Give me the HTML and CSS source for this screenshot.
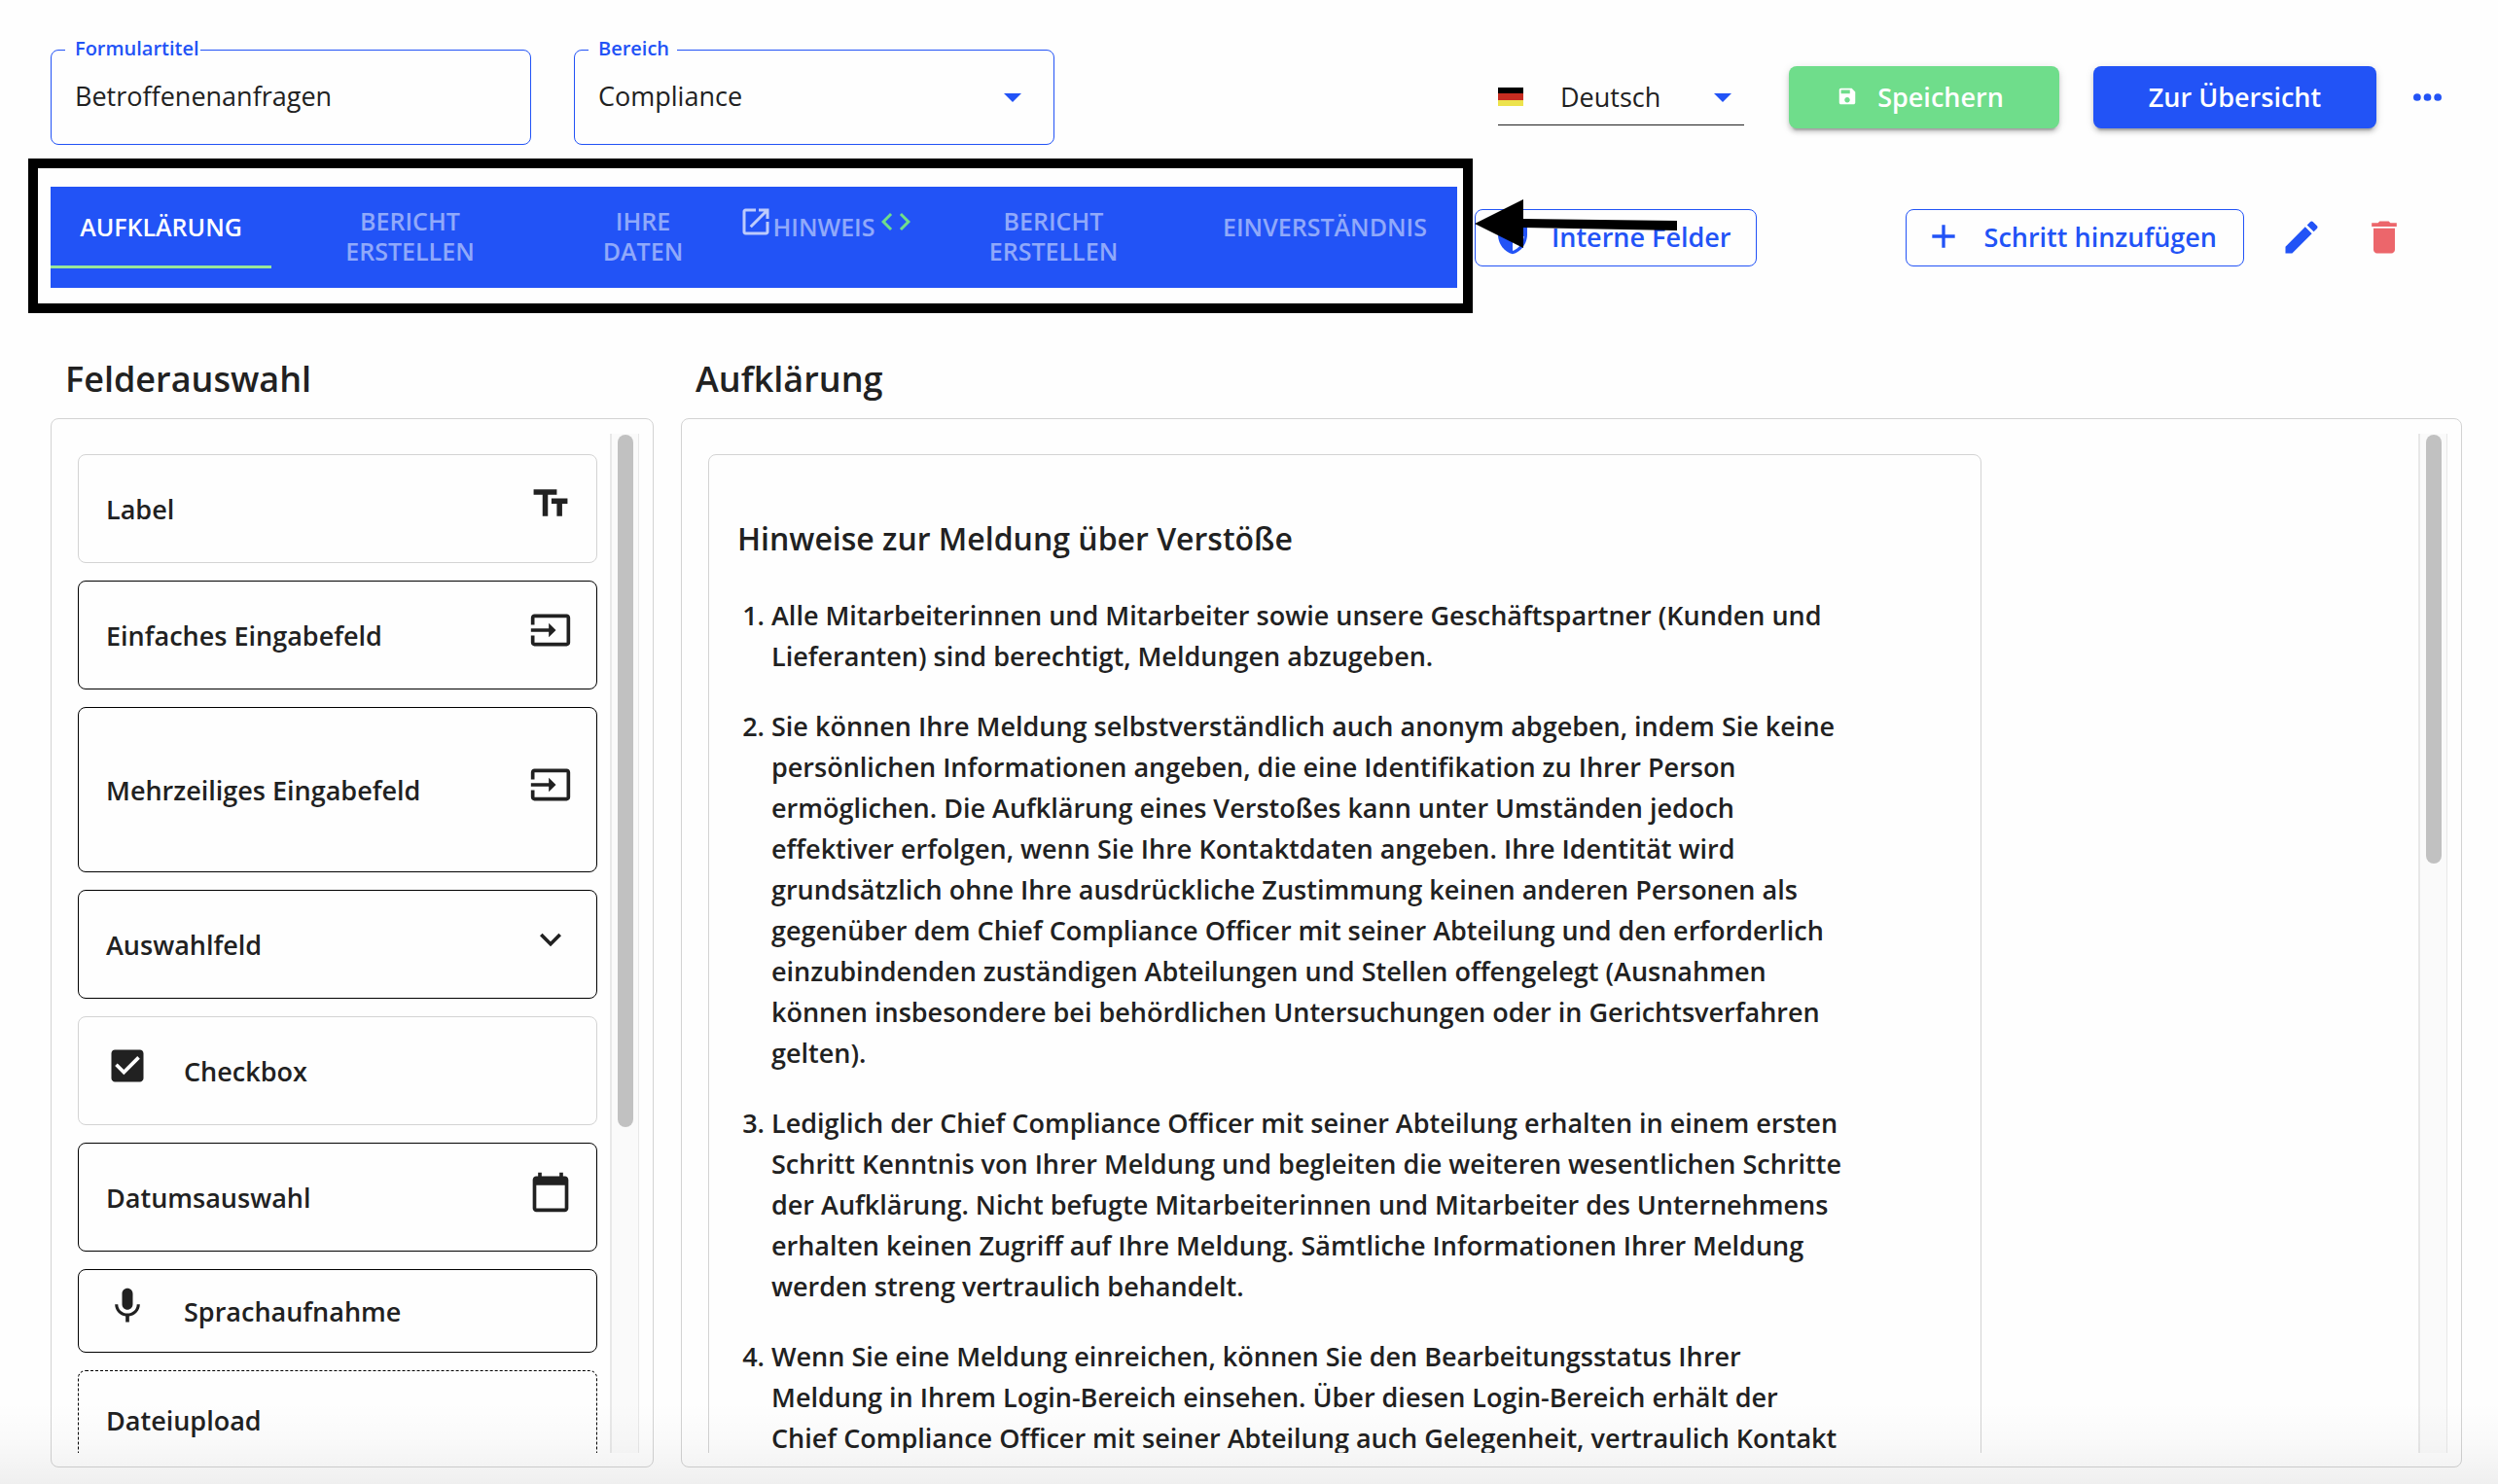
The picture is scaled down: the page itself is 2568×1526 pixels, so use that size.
FILE: index.html
```html
<!DOCTYPE html>
<html lang="de">
<head>
<meta charset="utf-8">
<title>Formular bearbeiten</title>
<link rel="stylesheet" href="styles.css">
</head>
<body>
<header class="topbar">
  <div class="field">
    <label class="field__label" for="title">Formulartitel</label>
    <input class="field__control" id="title" type="text" value="Betroffenenanfragen">
  </div>
  <div class="field field--select">
    <label class="field__label field__label--wide" for="area">Bereich</label>
    <select class="field__control" id="area"><option>Compliance</option></select>
  </div>
  <div class="topbar__actions">
    <div class="language">
      <svg class="language__flag" viewBox="0 0 26 19" aria-hidden="true"><rect width="26" height="6" fill="#000"/><rect y="6" width="26" height="7" fill="#c62c20"/><rect y="13" width="26" height="6" fill="#ede34c"/></svg>
      <select class="language__select" aria-label="Sprache"><option>Deutsch</option></select>
    </div>
    <button class="button button--save" type="button">
      <svg class="icon icon--small" viewBox="0 0 24 24" aria-hidden="true"><path d="M17 3H5c-1.110 0-2 .9-2 2v14c0 1.100.890 2 2 2h14c1.100 0 2-.9 2-2V7l-4-4zm-5 16c-1.660 0-3-1.340-3-3s1.340-3 3-3 3 1.340 3 3-1.340 3-3 3zm3-10H5V5h10v4z"/></svg>
      Speichern
    </button>
    <button class="button button--primary" type="button">Zur Übersicht</button>
    <button class="icon-button" type="button" aria-label="Mehr">
      <svg class="dots" viewBox="0 0 30 8" aria-hidden="true"><circle cx="4" cy="4" r="4"/><circle cx="15" cy="4" r="4"/><circle cx="26" cy="4" r="4"/></svg>
    </button>
  </div>
</header>

<div class="steps">
  <div class="steps__tabs">
    <nav class="tabs" aria-label="Schritte">
      <button class="tab tab--active" type="button">AUFKLÄRUNG</button>
      <button class="tab tab--tall" type="button">BERICHT<br>ERSTELLEN</button>
      <button class="tab tab--tall" type="button">IHRE<br>DATEN</button>
      <button class="tab" type="button">
        <svg class="tab__icon" viewBox="0 0 24 24" aria-hidden="true"><path d="M19 19H5V5h7V3H5c-1.110 0-2 .9-2 2v14c0 1.100.890 2 2 2h14c1.100 0 2-.9 2-2v-7h-2v7zM14 3v2h3.590l-9.830 9.830 1.410 1.410L19 6.410V10h2V3h-7z"/></svg>
        <span>HINWEIS</span>
        <svg class="tab__icon tab__icon--code" viewBox="0 0 24 24" aria-hidden="true"><path d="M9.400 16.600 4.800 12l4.600-4.600L8 6l-6 6 6 6 1.400-1.400zm5.200 0 4.600-4.600-4.600-4.600L16 6l6 6-6 6-1.400-1.400z"/></svg>
      </button>
      <button class="tab tab--tall" type="button">BERICHT<br>ERSTELLEN</button>
      <button class="tab" type="button">EINVERSTÄNDNIS</button>
    </nav>
    <div class="marker-frame"></div>
    <svg class="marker-arrow" viewBox="0 0 208 50" aria-hidden="true"><path d="M0 25 50 0v20l158 2v10L50 29v21z"/></svg>
  </div>
  <div class="steps__actions">
    <button class="button button--outline button--internal" type="button">
      <svg class="icon" viewBox="0 0 24 24" aria-hidden="true"><path d="M12 1 3 5v6c0 5.550 3.840 10.740 9 12 5.160-1.260 9-6.450 9-12V5l-9-4zm0 10.990h7c-.53 4.120-3.280 7.790-7 8.940V12H5V6.300l7-3.110v8.800z"/></svg>
      Interne Felder
    </button>
    <button class="button button--outline button--add" type="button">
      <svg class="icon" viewBox="0 0 24 24" aria-hidden="true"><path d="M19 13h-6v6h-2v-6H5v-2h6V5h2v6h6v2z"/></svg>
      Schritt hinzufügen
    </button>
    <button class="icon-button icon-button--edit" type="button" aria-label="Bearbeiten">
      <svg class="icon icon--large" viewBox="0 0 24 24" aria-hidden="true"><path d="M3 17.250V21h3.750L17.810 9.940l-3.750-3.750L3 17.250zM20.710 7.040c.39-.39.39-1.020 0-1.410l-2.340-2.340c-.39-.39-1.020-.39-1.410 0l-1.830 1.830 3.750 3.750 1.830-1.830z"/></svg>
    </button>
    <button class="icon-button icon-button--delete" type="button" aria-label="Löschen">
      <svg class="icon icon--large" viewBox="0 0 24 24" aria-hidden="true"><path d="M6 19c0 1.100.9 2 2 2h8c1.100 0 2-.9 2-2V7H6v12zM19 4h-3.500l-1-1h-5l-1 1H5v2h14V4z"/></svg>
    </button>
  </div>
</div>

<main class="editor">
  <section class="column">
    <h2 class="column__title">Felderauswahl</h2>
    <div class="panel">
      <div class="panel__scroll field-list">
        <div class="card card--light"><span>Label</span>
          <svg class="card__icon" viewBox="0 0 24 24" aria-hidden="true"><path d="M2.500 4v3h5v12h3V7h5V4h-13zm19 5h-9v3h3v7h3v-7h3V9z"/></svg></div>
        <div class="card"><span>Einfaches Eingabefeld</span>
          <svg class="card__icon" viewBox="0 0 24 24" aria-hidden="true"><path d="M21 3.010H3c-1.100 0-2 .9-2 2V9h2V4.990h18v14.030H3V15H1v4.010c0 1.100.9 1.980 2 1.980h18c1.100 0 2-.88 2-1.980v-14c0-1.110-.9-2-2-2zM11 16l4-4-4-4v3H1v2h10v3z"/></svg></div>
        <div class="card card--tall"><span>Mehrzeiliges Eingabefeld</span>
          <svg class="card__icon" viewBox="0 0 24 24" aria-hidden="true"><path d="M21 3.010H3c-1.100 0-2 .9-2 2V9h2V4.990h18v14.030H3V15H1v4.010c0 1.100.9 1.980 2 1.980h18c1.100 0 2-.88 2-1.980v-14c0-1.110-.9-2-2-2zM11 16l4-4-4-4v3H1v2h10v3z"/></svg></div>
        <div class="card"><span>Auswahlfeld</span>
          <svg class="card__icon" viewBox="0 0 24 24" aria-hidden="true"><path d="M16.590 8.590 12 13.170 7.410 8.590 6 10l6 6 6-6z"/></svg></div>
        <div class="card card--light card--lead">
          <svg class="card__icon" viewBox="0 0 24 24" aria-hidden="true"><path d="M19 3H5c-1.110 0-2 .9-2 2v14c0 1.100.890 2 2 2h14c1.110 0 2-.9 2-2V5c0-1.100-.89-2-2-2zm-9 14-5-5 1.410-1.410L10 14.170l7.590-7.590L19 8l-9 9z"/></svg><span>Checkbox</span></div>
        <div class="card"><span>Datumsauswahl</span>
          <svg class="card__icon" viewBox="0 0 24 24" aria-hidden="true"><path d="M20 3h-1V1h-2v2H7V1H5v2H4c-1.100 0-2 .9-2 2v16c0 1.100.9 2 2 2h16c1.100 0 2-.9 2-2V5c0-1.100-.9-2-2-2zm0 18H4V8h16v13z"/></svg></div>
        <div class="card card--short card--lead">
          <svg class="card__icon" viewBox="0 0 24 24" aria-hidden="true"><path d="M12 14c1.660 0 2.990-1.340 2.990-3L15 5c0-1.660-1.340-3-3-3S9 3.340 9 5v6c0 1.660 1.340 3 3 3zm5.300-3c0 3-2.540 5.100-5.300 5.100S6.700 14 6.700 11H5c0 3.410 2.720 6.230 6 6.720V21h2v-3.280c3.280-.48 6-3.300 6-6.720h-1.700z"/></svg><span>Sprachaufnahme</span></div>
        <div class="card card--upload"><span>Dateiupload</span></div>
      </div>
      <div class="scrollbar"><div class="scrollbar__thumb" style="height:68.1%"></div></div>
    </div>
  </section>

  <section class="column">
    <h2 class="column__title">Aufklärung</h2>
    <div class="panel">
      <div class="panel__scroll">
        <article class="notice">
          <h3 class="notice__title">Hinweise zur Meldung über Verstöße</h3>
          <ol class="notice__list">
            <li>Alle Mitarbeiterinnen und Mitarbeiter sowie unsere Geschäftspartner (Kunden und Lieferanten) sind berechtigt, Meldungen abzugeben.</li>
            <li>Sie können Ihre Meldung selbstverständlich auch anonym abgeben, indem Sie keine persönlichen Informationen angeben, die eine Identifikation zu Ihrer Person ermöglichen. Die Aufklärung eines Verstoßes kann unter Umständen jedoch effektiver erfolgen, wenn Sie Ihre Kontaktdaten angeben. Ihre Identität wird grundsätzlich ohne Ihre ausdrückliche Zustimmung keinen anderen Personen als gegenüber dem Chief Compliance Officer mit seiner Abteilung und den erforderlich einzubindenden zuständigen Abteilungen und Stellen offengelegt (Ausnahmen können insbesondere bei behördlichen Untersuchungen oder in Gerichtsverfahren gelten).</li>
            <li>Lediglich der Chief Compliance Officer mit seiner Abteilung erhalten in einem ersten Schritt Kenntnis von Ihrer Meldung und begleiten die weiteren wesentlichen Schritte der Aufklärung. Nicht befugte Mitarbeiterinnen und Mitarbeiter des Unternehmens erhalten keinen Zugriff auf Ihre Meldung. Sämtliche Informationen Ihrer Meldung werden streng vertraulich behandelt.</li>
            <li>Wenn Sie eine Meldung einreichen, können Sie den Bearbeitungsstatus Ihrer Meldung in Ihrem Login-Bereich einsehen. Über diesen Login-Bereich erhält der Chief Compliance Officer mit seiner Abteilung auch Gelegenheit, vertraulich Kontakt</li>
          </ol>
        </article>
      </div>
      <div class="scrollbar"><div class="scrollbar__thumb" style="height:42.2%"></div></div>
    </div>
  </section>
</main>
<div class="page-shade"></div>
</body>
</html>
```
FILE: styles.css
```css
:root {
  --blue: #2253f6;
  --green: #6fdd8b;
  --red: #ec666b;
  --text: #212121;
  --line: #d3d3d3;
}

* { box-sizing: border-box; }

body {
  margin: 0;
  height: 100vh;
  display: flex;
  flex-direction: column;
  position: relative;
  overflow: hidden;
  background: #fefefe;
  color: var(--text);
  font-family: "Open Sans", sans-serif;
  font-size: 27px;
}

button, input, select { font: inherit; color: inherit; }
button { cursor: pointer; }
svg { fill: currentColor; flex: none; display: block; }

/* Top bar */
.topbar {
  display: flex;
  align-items: center;
  gap: 44px;
  padding: 51px 58px 0 52px;
}

.field {
  position: relative;
  flex: 0 1 494px;
}

.field__label {
  position: absolute;
  top: -15px;
  left: 15px;
  padding: 0 1px 0 10px;
  background: #fefefe;
  color: var(--blue);
  font-size: 20px;
  font-weight: 600;
  line-height: 28px;
}

.field__label--wide { padding-right: 8px; }

.field__control {
  display: block;
  width: 100%;
  height: 98px;
  padding: 0 24px 3px;
  border: 1px solid var(--blue);
  border-radius: 8px;
  background: transparent;
  appearance: none;
}

.field--select::after,
.language::after {
  content: "";
  position: absolute;
  top: 45px;
  right: 34px;
  border: 9px solid transparent;
  border-top-color: var(--blue);
  border-bottom: 0;
  pointer-events: none;
}

.topbar__actions {
  display: flex;
  align-items: center;
  margin-left: auto;
}

.language {
  position: relative;
  display: flex;
  align-items: center;
  width: 253px;
  height: 58px;
  margin-right: 46px;
  border-bottom: 1px solid var(--text);
}

.language::after { top: 25px; right: 13px; }
.language__flag { width: 26px; height: 19px; }

.language__select {
  flex: 1;
  padding: 0 0 0 38px;
  border: 0;
  background: transparent;
  appearance: none;
}

/* Buttons */
.button {
  display: flex;
  align-items: center;
  justify-content: center;
  flex: none;
  padding: 0 0 2px;
  border: 0;
  border-radius: 8px;
  font-weight: 600;
  white-space: nowrap;
}

.button--save,
.button--primary {
  height: 64px;
  color: #fff;
  box-shadow: 0 6px 2px -4px rgba(0, 0, 0, .2), 0 4px 4px rgba(0, 0, 0, .14), 0 2px 10px rgba(0, 0, 0, .12);
}

.button--save {
  width: 278px;
  gap: 20px;
  margin-right: 35px;
  padding-right: 8px;
  background: var(--green);
}

.button--primary {
  width: 291px;
  margin-right: 38px;
  background: var(--blue);
}

.button--outline {
  height: 59px;
  gap: 22px;
  padding: 0 27px 2px 18px;
  border: 1px solid var(--blue);
  background: #fefefe;
  color: var(--blue);
}

.button--internal { gap: 20px; padding-right: 25px; }
.button--add { margin-left: auto; }

.icon { width: 40px; height: 40px; }
.icon--small { width: 22px; height: 22px; }
.icon--large { width: 44px; height: 44px; }
.dots { width: 29px; height: 8px; }

.icon-button {
  flex: none;
  padding: 0;
  border: 0;
  background: none;
  color: var(--blue);
}

.icon-button--edit { margin-left: 37px; }
.icon-button--delete { margin-left: 41px; color: var(--red); }

/* Step tabs */
.steps {
  display: grid;
  grid-template-columns: 1446fr 957fr;
  column-gap: 18px;
  align-items: center;
  padding: 43px 95px 0 52px;
}

.steps__tabs { position: relative; }

.steps__actions {
  display: flex;
  align-items: center;
}

.tabs {
  display: grid;
  grid-template-columns: 227fr 285fr 194fr 182fr 286fr 272fr;
  height: 104px;
  background: var(--blue);
}

.tab {
  display: flex;
  align-items: center;
  justify-content: center;
  height: 84px;
  padding: 0 0 2px;
  border: 0;
  background: none;
  color: rgba(255, 255, 255, .5);
  font-size: 25px;
  font-weight: 600;
  line-height: 31px;
  white-space: nowrap;
}

.tab--tall { height: 104px; }

.tab--active {
  color: #fff;
  box-shadow: inset 0 -3px #98e69a;
}

.tab__icon {
  width: 36px;
  height: 36px;
  margin-bottom: 10px;
  color: rgba(255, 255, 255, .7);
}

.tab__icon--code { margin-left: 4px; color: var(--green); }

.marker-frame {
  position: absolute;
  inset: -29px -16px -26px -23px;
  border: 10px solid #000;
  pointer-events: none;
}

.marker-arrow {
  position: absolute;
  top: 13px;
  left: calc(100% + 18px);
  z-index: 1;
  width: 208px;
  height: 50px;
  fill: #000;
  pointer-events: none;
}

/* Editor */
.editor {
  flex: 1;
  min-height: 0;
  display: grid;
  grid-template-columns: 620fr 1831fr;
  column-gap: 28px;
  padding: 70px 37px 17px 52px;
}

.column {
  display: flex;
  flex-direction: column;
  min-width: 0;
  min-height: 0;
}

.column__title {
  margin: 0 0 16px;
  padding-left: 15px;
  font-size: 36px;
  font-weight: 600;
  line-height: 48px;
}

.panel {
  flex: 1;
  min-height: 0;
  display: flex;
  gap: 13px;
  padding: 15px 14px 14px 27px;
  border: 1px solid var(--line);
  border-radius: 8px;
}

.panel__scroll {
  flex: 1;
  overflow: hidden;
  padding-top: 21px;
}

.scrollbar {
  flex: none;
  width: 30px;
  padding: 1px 5px 1px 6px;
  border: solid #e8e8e8;
  border-width: 0 1px 0 2px;
  background: #fafafa;
}

.scrollbar__thumb {
  border-radius: 8px;
  background: #c1c1c1;
}

.field-list {
  display: flex;
  flex-direction: column;
  gap: 18px;
}

.card {
  flex: none;
  display: flex;
  align-items: center;
  justify-content: space-between;
  height: 112px;
  padding: 0 25px 0 28px;
  border: 1px solid #000;
  border-radius: 8px;
  font-weight: 600;
}

.card--light { border-color: var(--line); }
.card--tall { height: 170px; }
.card--short { height: 86px; }
.card--lead { justify-content: flex-start; gap: 36px; }
.card--upload { height: 102px; border-style: dashed; }

.card__icon {
  width: 44px;
  height: 44px;
  margin-bottom: 10px;
}

.notice {
  width: 75%;
  padding: 65px 135px 60px 29px;
  border: 1px solid var(--line);
  border-radius: 8px;
  font-weight: 600;
}

.notice__title {
  margin: 0 0 37px;
  font-size: 32px;
  font-weight: 600;
  line-height: 42px;
}

.notice__list {
  display: flex;
  flex-direction: column;
  gap: 30px;
  margin: 0;
  padding-left: 35px;
  line-height: 42px;
}

.page-shade {
  position: absolute;
  inset: auto 0 0;
  height: 84px;
  background: linear-gradient(rgba(0, 0, 0, 0), rgba(0, 0, 0, .02) 50%, rgba(0, 0, 0, .06));
  pointer-events: none;
}
```
